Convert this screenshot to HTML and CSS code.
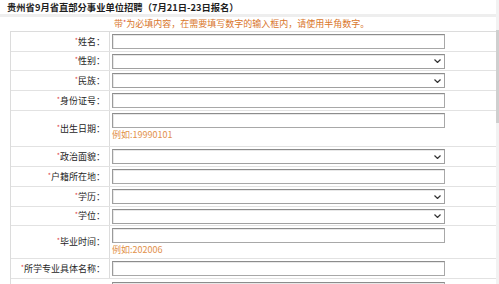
FILE: index.html
```html
<!DOCTYPE html>
<html lang="zh-CN">
<head>
<meta charset="utf-8">
<title>贵州省9月省直部分事业单位招聘</title>
<link rel="stylesheet" href="styles.css">
</head>
<body>
<div class="page">
  <div class="main">
    <h1 class="title">贵州省9月省直部分事业单位招聘（7月21日-23日报名）</h1>
    <div class="notice">带<span class="req">*</span>为必填内容，在需要填写数字的输入框内，请使用半角数字。</div>
    <div class="form">
      <div class="row"><div class="label"><span class="req">*</span>姓名：</div><div class="value"><span class="input"></span></div></div>
      <div class="row short"><div class="label"><span class="req">*</span>性别：</div><div class="value"><span class="input select"><svg class="chev" width="7" height="4" viewBox="0 0 7 4"><polyline points="0.5,0.5 3.5,3.5 6.5,0.5"/></svg></span></div></div>
      <div class="row"><div class="label"><span class="req">*</span>民族：</div><div class="value"><span class="input select"><svg class="chev" width="7" height="4" viewBox="0 0 7 4"><polyline points="0.5,0.5 3.5,3.5 6.5,0.5"/></svg></span></div></div>
      <div class="row"><div class="label"><span class="req">*</span>身份证号：</div><div class="value"><span class="input"></span></div></div>
      <div class="row tall"><div class="label"><span class="req">*</span>出生日期：</div><div class="value stack"><span class="input"></span><span class="hint">例如:19990101</span></div></div>
      <div class="row"><div class="label"><span class="req">*</span>政治面貌：</div><div class="value"><span class="input select"><svg class="chev" width="7" height="4" viewBox="0 0 7 4"><polyline points="0.5,0.5 3.5,3.5 6.5,0.5"/></svg></span></div></div>
      <div class="row"><div class="label"><span class="req">*</span>户籍所在地：</div><div class="value"><span class="input"></span></div></div>
      <div class="row"><div class="label"><span class="req">*</span>学历：</div><div class="value"><span class="input select"><svg class="chev" width="7" height="4" viewBox="0 0 7 4"><polyline points="0.5,0.5 3.5,3.5 6.5,0.5"/></svg></span></div></div>
      <div class="row short"><div class="label"><span class="req">*</span>学位：</div><div class="value"><span class="input select"><svg class="chev" width="7" height="4" viewBox="0 0 7 4"><polyline points="0.5,0.5 3.5,3.5 6.5,0.5"/></svg></span></div></div>
      <div class="row mid"><div class="label"><span class="req">*</span>毕业时间：</div><div class="value stack"><span class="input"></span><span class="hint">例如:202006</span></div></div>
      <div class="row"><div class="label"><span class="req">*</span>所学专业具体名称：</div><div class="value"><span class="input"></span></div></div>
      <div class="row last"><div class="label"></div><div class="value"><span class="input"></span></div></div>
    </div>
  </div>
  <div class="scroll"><div class="thumb"></div></div>
</div>
</body>
</html>
```

FILE: styles.css
```css
* { box-sizing: border-box; margin: 0; padding: 0; }

html, body {
  overflow: hidden;
}

body {
  width: 499px;
  height: 284px;
  background: #fff;
  font-family: "Noto Sans CJK SC", "Noto Sans", sans-serif;
  font-size: 9px;
  color: #262626;
}

.page {
  display: flex;
  height: 284px;
  overflow: hidden;
}

.main {
  width: 496px;
  overflow: hidden;
}

.title {
  height: 17px;
  line-height: 14px;
  padding-left: 7px;
  font-size: 9.3px;
  font-weight: bold;
  color: #1e1e1e;
  border-bottom: 3px solid #eeeeee;
}

.notice {
  height: 14px;
  line-height: 14px;
  padding-left: 114px;
  color: #d9762b;
}

.req {
  color: #e04848;
  font-size: 7px;
  position: relative;
  top: -2px;
}

.form {
  margin-left: 10px;
  border-top: 1px solid #dcdcdc;
  border-left: 1px solid #dcdcdc;
}

.row {
  display: grid;
  grid-template-columns: 99px 1fr;
  height: 20px;
  border-bottom: 1px solid #e2e2e2;
}

.row.short { height: 19px; }
.row.tall { height: 36px; }
.row.mid { height: 33px; }
.row.last { height: 6px; align-items: start; border-bottom: 0; }

.label {
  display: flex;
  align-items: center;
  justify-content: flex-end;
  padding-right: 4px;
  border-right: 1px solid #dcdcdc;
  line-height: 12px;
  white-space: nowrap;
}

.value {
  display: flex;
  align-items: center;
  padding-left: 2px;
}

.row.last .value {
  align-items: flex-start;
  padding-top: 3px;
}

.value.stack {
  flex-direction: column;
  align-items: flex-start;
  padding-top: 2px;
}

.input {
  display: flex;
  flex: none;
  width: 333px;
  height: 15px;
  background: #fff;
  border: 1px solid #a8a8a8;
  border-top-color: #8c8c8c;
  border-left-color: #9a9a9a;
  box-shadow: inset 1px 1px 0 #e8e8e8;
}

.input.select {
  align-items: center;
  justify-content: flex-end;
  padding-right: 3px;
  border-color: #a0a0a0;
  border-top-color: #8c8c8c;
}

.chev polyline {
  fill: none;
  stroke: #333;
  stroke-width: 1.2;
}

.hint {
  margin-top: 1px;
  line-height: 12px;
  color: #e2914a;
}

.scroll {
  width: 3px;
  height: 284px;
  background: #f2f2f2;
}

.thumb {
  margin-top: 30px;
  height: 93px;
  background: #cfcfcf;
}
```
